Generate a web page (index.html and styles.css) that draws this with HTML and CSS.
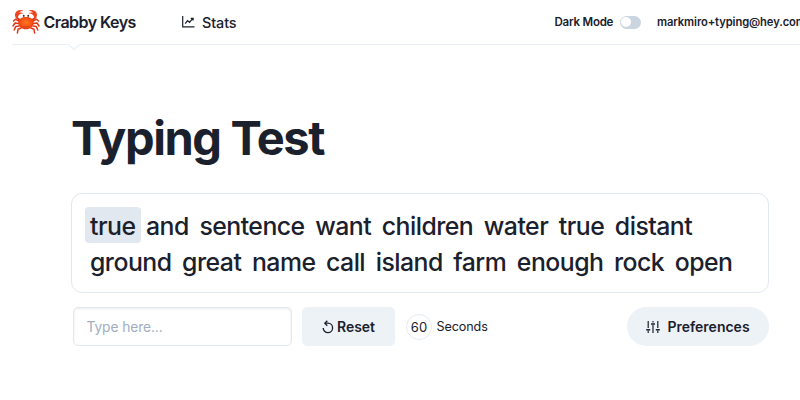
FILE: index.html
```html
<!DOCTYPE html>
<html lang="en">
<head>
<meta charset="utf-8">
<title>Crabby Keys</title>
<link rel="stylesheet" href="styles.css">
</head>
<body>
<header class="header">
  <a class="brand">
    <svg class="crab" viewBox="0 0 28 26" fill="none">
      <defs>
        <radialGradient id="shell" cx=".5" cy=".45" r=".6"><stop offset="0" stop-color="#ff7a1c"/><stop offset=".65" stop-color="#f44d16"/><stop offset="1" stop-color="#d92d12"/></radialGradient>
      </defs>
      <g stroke="#df3715" stroke-width="1.5" stroke-linecap="round" stroke-linejoin="round">
        <path d="M7 12 3.500 10.300 1.500 12M6.500 14.500 3 14 1 17M7 17 3.800 17.400 2.200 21M9 19 6 20.300 5.400 24M21 12l3.500-1.700 2 1.700M21.500 14.500 25 14l2 3M21 17l3.200.4 1.600 3.600M19 19l3 1.300.6 3.700"/>
        <path stroke-width="2" d="M8.500 11.500 4.500 8.500M19.500 11.500l4-3"/>
        <path d="M11.800 9V6.800M16.200 9V6.800" stroke-width="1"/>
      </g>
      <path fill="#ec4520" d="M5.500 9.500C2.500 8.500 2 4.500 5 2c2-1.500 5-1.400 6.500-.2C9.500 2 8 2.600 7 3.700c1.700-.5 3.500-.3 4.500.8-2.300-.1-3.700.6-4.700 1.700-.8.900-.9 2-1.300 3.300zM22.500 9.500c3-1 3.500-5 .5-7.500-2-1.500-5-1.400-6.500-.2 2 .2 3.500.8 4.500 1.900-1.700-.5-3.500-.3-4.500.8 2.300-.1 3.700.6 4.700 1.700.8.900.9 2 1.300 3.300z"/>
      <path fill="url(#shell)" d="M6.300 13.500c0-3.400 3.500-5.500 7.700-5.500s7.700 2.100 7.700 5.500c0 3.800-3.500 6.800-7.700 6.800s-7.700-3-7.700-6.800z"/>
      <circle cx="11.700" cy="6.700" r=".9" fill="#402d2a"/><circle cx="16.300" cy="6.700" r=".9" fill="#402d2a"/>
      <path stroke="#cf3511" stroke-width=".6" d="M11 17.500q3 1.300 6 0"/>
    </svg>
    <span class="brand-name">Crabby Keys</span>
  </a>
  <a class="nav-link">
    <svg class="chart" viewBox="0 0 13 12" fill="none" stroke="#1a202c"><path stroke-width="1.200" d="M.7 0v10.900H12.500"/><path stroke-width="1.300" d="m3.200 7.600 2.300-3 2 1.700 3.500-4.100M8.700 2.300h2.400v2.200"/></svg>
    <span>Stats</span>
  </a>
  <div class="account">
    <span class="mode">Dark Mode</span>
    <span class="switch"></span>
    <span class="email">markmiro+typing@hey.com</span>
  </div>
  <svg class="notch" viewBox="0 0 12 7"><path d="M0 0 6 5.500 12 0" fill="#fff" stroke="#edf2f7" stroke-width="1.300"/></svg>
</header>
<main class="main">
  <h1 class="title">Typing Test</h1>
  <div class="words">
    <div class="line"><span class="word current">true</span><span class="word">and</span><span class="word">sentence</span><span class="word">want</span><span class="word">children</span><span class="word">water</span><span class="word">true</span><span class="word">distant</span></div>
    <div class="line"><span class="word">ground</span><span class="word">great</span><span class="word">name</span><span class="word">call</span><span class="word">island</span><span class="word">farm</span><span class="word">enough</span><span class="word">rock</span><span class="word">open</span></div>
  </div>
  <div class="controls">
    <input class="entry" type="text" placeholder="Type here...">
    <button class="button reset">
      <svg class="reset-icon" viewBox="0 0 12 14" fill="none" stroke="#1a202c" stroke-width="1.300"><path d="M1.200 7.900a4.700 4.700 0 1 0 4.700-4.700H3"/><path d="M5.300.7 2.800 3.200 5.300 5.700"/></svg>
      <span>Reset</span>
    </button>
    <span class="count">60</span>
    <span class="unit">Seconds</span>
    <button class="button preferences">
      <svg class="sliders" viewBox="0 0 14 12" fill="none" stroke="#1a202c" stroke-width="1.200"><path d="M2.200 0v7M2.200 9.500V12M7 0v1.500M7 4v8M11.800 0v7M11.800 9.500V12"/><path stroke-width="1.600" d="M.2 8.800h4M5 3h4M9.800 8.800h4"/></svg>
      <span>Preferences</span>
    </button>
  </div>
</main>
</body>
</html>
```
FILE: styles.css
```css
* { box-sizing: border-box; }
body {
  margin: 0;
  width: 800px;
  height: 400px;
  overflow: hidden;
  background: #fff;
  color: #1a202c;
  font-family: Inter, "Liberation Sans", sans-serif;
}
.header {
  position: relative;
  display: flex;
  align-items: center;
  height: 45px;
  margin-left: 12px;
  border-bottom: 1px solid #e9eff5;
  white-space: nowrap;
}
.brand { display: flex; align-items: center; width: 170px; }
.crab { width: 28px; height: 26px; margin-right: 3.500px; }
.brand-name { font-size: 16px; font-weight: 600; letter-spacing: -0.54px; }
.nav-link { display: flex; align-items: center; font-size: 14.400px; font-weight: 500; letter-spacing: -0.1px; }
.chart { width: 13px; height: 12px; margin-right: 7px; }
.account {
  display: flex;
  align-items: center;
  width: 245.500px;
  margin-left: auto;
  font-size: 11.500px;
  font-weight: 600;
  letter-spacing: -0.22px;
}
.mode { flex: none; width: 65px; }
.email { font-size: 11.200px; letter-spacing: -0.1px; }
.switch {
  flex: none;
  width: 21px;
  height: 13px;
  margin-right: 16.500px;
  padding: 1.500px;
  border-radius: 7px;
  background: #cbd5e0;
}
.switch::before {
  content: "";
  display: block;
  width: 10px;
  height: 10px;
  border-radius: 50%;
  background: #fff;
}
.notch { position: absolute; left: 56px; top: 44px; width: 12px; height: 7px; }
.main { width: 698px; margin: 65px 0 0 71px; }
.title {
  margin: 0 0 28px;
  font-size: 47px;
  line-height: 56px;
  height: 55px;
  font-weight: 700;
  letter-spacing: -1.400px;
}
.words {
  height: 100px;
  padding: 13px;
  border: 1px solid #e2e8f0;
  border-radius: 11px;
}
.line { display: flex; gap: 0.3px; height: 36px; }
.word {
  height: 36px;
  padding: 0 5.300px 0 5px;
  border-radius: 4px;
  font-size: 24.800px;
  line-height: 39px;
  font-weight: 500;
  letter-spacing: -0.520px;
}
.current { background: #e2e8f0; }
.controls { display: flex; align-items: center; height: 39px; margin-top: 14px; }
.entry {
  width: 219px;
  height: 39px;
  margin-left: 2px;
  padding: 0 12.500px;
  border: 1px solid #e2e8f0;
  border-radius: 5px;
  box-shadow: inset 0 1px 3px rgba(0, 0, 0, .08);
  font: 400 13.800px Inter, sans-serif;
  letter-spacing: -0.1px;
}
.entry::placeholder { color: #a0aec0; }
.button {
  display: flex;
  align-items: center;
  justify-content: center;
  height: 39px;
  padding: 0;
  border: 0;
  border-radius: 5px;
  background: #edf2f7;
  color: #1a202c;
  font: 600 14px Inter, sans-serif;
}
.reset { width: 93px; margin: 0 11px 0 10px; }
.reset-icon { width: 12px; height: 14px; margin-right: 3px; }
.count {
  display: flex;
  align-items: center;
  justify-content: center;
  width: 26px;
  height: 26px;
  border: 1px solid #e5ecf3;
  border-radius: 50%;
  font-size: 13px;
}
.unit { margin-left: 4.500px; font-size: 12.600px; letter-spacing: -0.1px; line-height: 17px; }
.preferences { width: 142px; margin-left: auto; border-radius: 20px; }
.sliders { width: 14px; height: 12px; margin-right: 7px; }
```
